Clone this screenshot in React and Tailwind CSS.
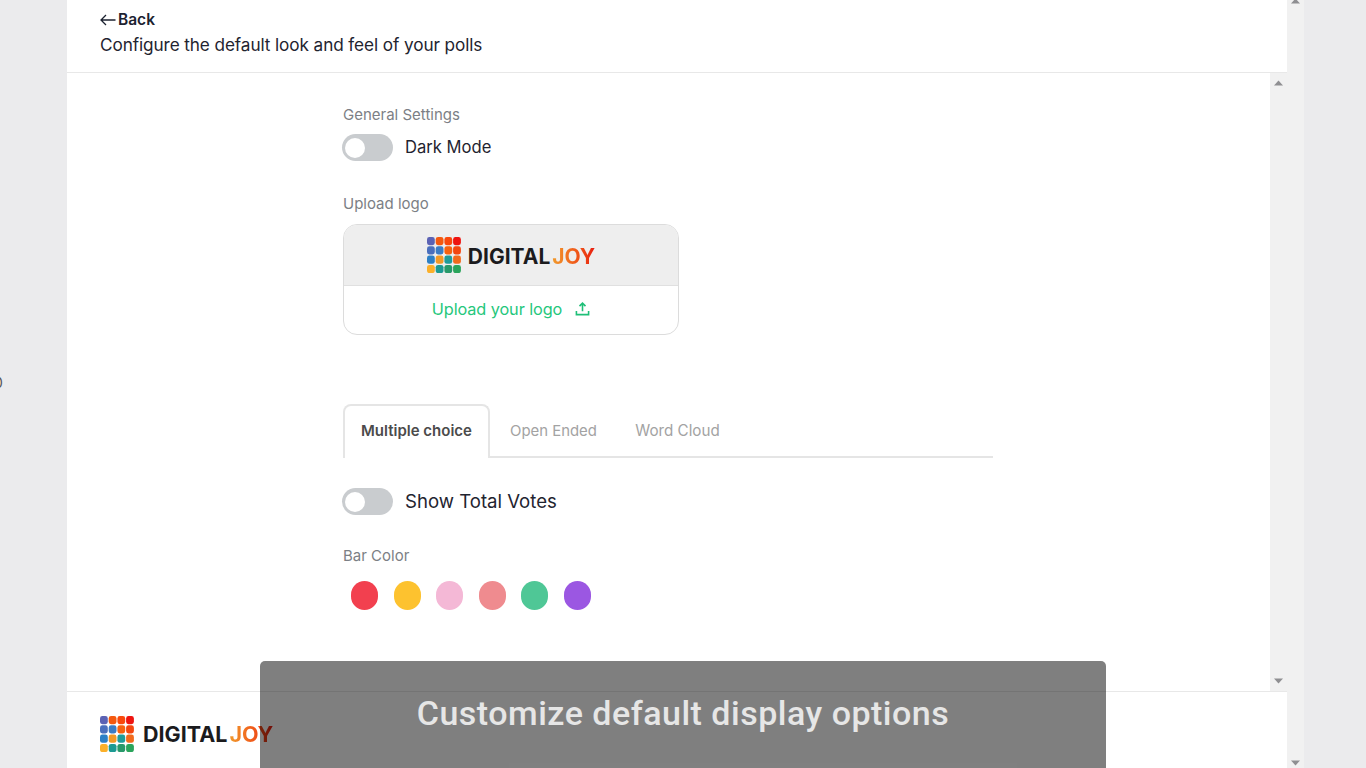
import React from "react";

const font = "font-['Inter','Liberation_Sans',sans-serif]";

function Mark() {
  const colors = [
    "#5b62b4", "#f4590f", "#f9480c", "#ee1410",
    "#4a6fbd", "#3b7cc4", "#f6620f", "#f4460f",
    "#2c80c6", "#f19a27", "#1f9c9a", "#f26a1c",
    "#fbb02a", "#1c9a92", "#28996a", "#2aa45b",
  ];
  return (
    <svg width="34" height="36" viewBox="0 0 34 36" className="shrink-0">
      {colors.map((c, i) => (
        <rect key={i} x={(i % 4) * 8.7} y={Math.floor(i / 4) * 9.3} width="7.8" height="8.2" rx="2.4" fill={c} />
      ))}
    </svg>
  );
}

function Logo({ small }) {
  return (
    <div className={`flex items-center ${small ? "gap-[7px]" : "gap-[9px]"}`}>
      <Mark />
      <div
        className={`flex pt-[2px] leading-none font-bold font-['Inter',sans-serif] text-[#1b1b1d] ${
          small ? "text-[21px]" : "text-[21.5px]"
        }`}
      >
        <span>DIGITAL</span>
        <span className="ml-[2px] bg-gradient-to-r from-[#f09a2c] via-[#f0601c] to-[#e8140f] bg-clip-text text-transparent">JOY</span>
      </div>
    </div>
  );
}

function Toggle() {
  return (
    <div className="-ml-[1px] flex h-[27px] w-[51px] shrink-0 items-center rounded-full bg-[#c9cccf] pl-[3px]">
      <div className="h-[20px] w-[20px] rounded-full bg-white" />
    </div>
  );
}

function Arrow({ up, className = "" }) {
  return (
    <svg width="9" height="6" viewBox="0 0 9 6" className={className}>
      <path d={up ? "M4.5 0.5 L9 5.5 L0 5.5 Z" : "M0 0.5 L9 0.5 L4.5 5.5 Z"} fill="#8f8f92" />
    </svg>
  );
}

export default function App() {
  const dots = ["#f2404f", "#fdc22f", "#f4b8d6", "#ef8b8f", "#4fc796", "#9b57e2"];
  return (
    <div className={`relative flex h-screen w-full overflow-hidden bg-[#ebebed] ${font}`}>
      <span className="absolute left-[-6px] top-[375px] text-[14px] leading-[16px] text-[#555]">0</span>

      <div className="ml-[67px] flex h-full w-[1220px] flex-col bg-white">
        <header className="h-[73px] shrink-0 border-b border-[#e8e8e8] pl-[33px] pt-[10px]">
          <div className="flex h-[19px] items-center gap-[2px] text-[15.5px] font-semibold text-[#1c2230]">
            <svg width="16" height="12" viewBox="0 0 16 12" fill="none" stroke="#1c2230" strokeWidth="1.3">
              <path d="M15.5 6H1M6 1 1 6l5 5" />
            </svg>
            <span>Back</span>
          </div>
          <p className="mt-[5px] text-[17.2px] leading-[22px] tracking-[-0.1px] text-[#1f2430]">
            Configure the default look and feel of your polls
          </p>
        </header>

        <div className="flex min-h-0 flex-1">
          <main className="min-w-0 flex-1 pl-[276px] pt-[32px]">
            <p className="text-[15px] leading-[20px] text-[#7c7f85]">General Settings</p>
            <div className="mt-[9px] flex items-center gap-[12px]">
              <Toggle />
              <span className="-mt-[1px] text-[16.6px] leading-[27px] text-[#1f2430]">Dark Mode</span>
            </div>

            <p className="mt-[33px] text-[15px] leading-[20px] text-[#7c7f85]">Upload logo</p>
            <div className="mt-[10px] h-[111px] w-[336px] overflow-hidden rounded-[14px] border border-[#dcdcdc]">
              <div className="flex h-[61px] items-center justify-center border-b border-[#e0e0e0] bg-[#eeeeee]">
                <Logo small />
              </div>
              <div className="flex h-[46px] items-center justify-center gap-[13px] text-[#25c77c]">
                <span className="text-[16.3px] tracking-[-0.1px]">Upload your logo</span>
                <svg width="15" height="16" viewBox="0 0 16 16" fill="none" stroke="#1fbf78" strokeWidth="1.7">
                  <path d="M8 10.5V2M4.8 5 8 1.8 11.2 5M1.5 10v4h13v-4" />
                </svg>
              </div>
            </div>

            <div className="mt-[69px] flex h-[54px] w-[650px] items-stretch border-b-2 border-[#e5e5e5]">
              <div className="-mb-[2px] flex w-[147px] items-center justify-center rounded-t-[8px] border-x-2 border-t-2 border-[#e5e5e5] bg-white pb-[2px] text-[15px] font-semibold text-[#4b4b4b]">
                Multiple choice
              </div>
              <div className="flex w-[127px] items-center justify-center pt-[2px] text-[14.9px] text-[#a3a3a3]">Open Ended</div>
              <div className="flex w-[121px] items-center justify-center pt-[2px] text-[15.2px] text-[#a3a3a3]">Word Cloud</div>
            </div>

            <div className="mt-[30px] flex items-center gap-[12px]">
              <Toggle />
              <span className="text-[18.6px] leading-[27px] text-[#1f2430]">Show Total Votes</span>
            </div>

            <p className="mt-[31px] text-[15px] leading-[20px] text-[#7c7f85]">Bar Color</p>
            <div className="mt-[15px] flex gap-[15.5px] pl-[8px]">
              {dots.map((c) => (
                <div key={c} className="h-[29px] w-[27px] rounded-full" style={{ backgroundColor: c }} />
              ))}
            </div>
          </main>
          <div className="flex w-[17px] shrink-0 flex-col items-center justify-between bg-[#f1f1f1] py-[7px]">
            <Arrow up />
            <Arrow />
          </div>
        </div>

        <footer className="flex h-[77px] shrink-0 items-center border-t border-[#e8e8e8] pl-[33px] pt-[8px]">
          <Logo />
        </footer>
      </div>

      <div className="flex h-full w-[17px] flex-col items-center justify-between bg-[#f1f1f1] pb-[2px]">
        <Arrow up className="-mt-[2px]" />
        <Arrow />
      </div>

      <div className="absolute bottom-0 left-[260px] flex h-[107px] w-[846px] items-start justify-center rounded-t-[5px] bg-black/50 pt-[28px]">
        <span className="font-['Roboto',sans-serif] text-[34px] font-medium leading-[48px] tracking-[0.5px] text-[#e6e6e6]">
          Customize default display options
        </span>
      </div>
    </div>
  );
}
